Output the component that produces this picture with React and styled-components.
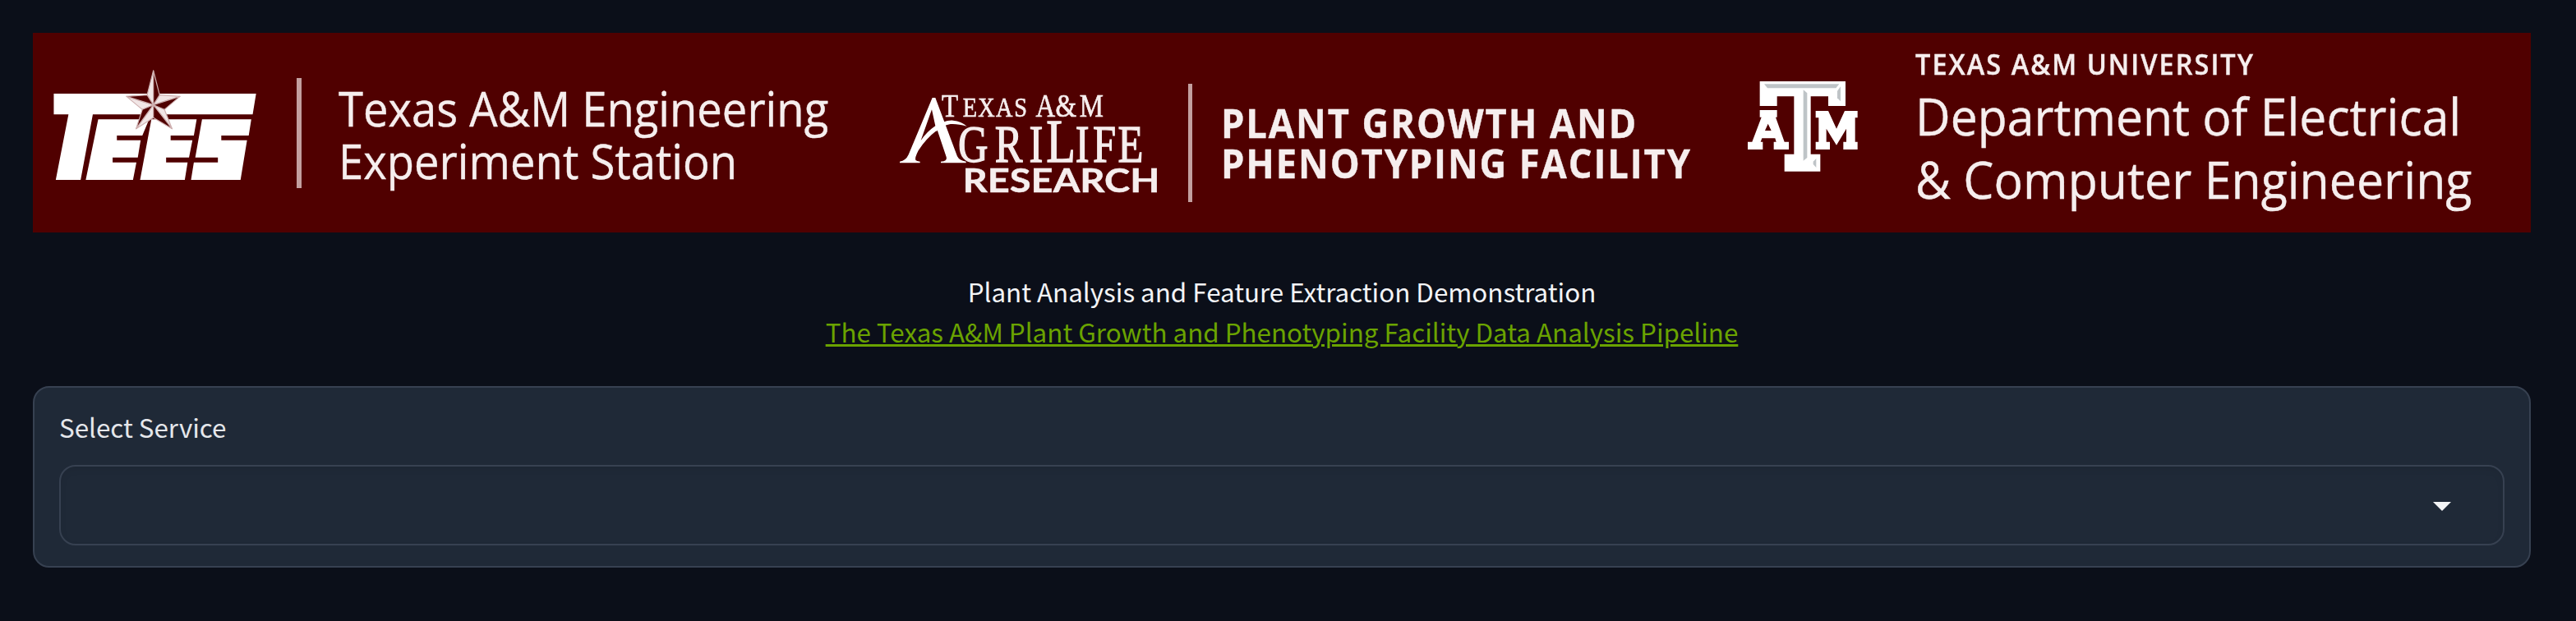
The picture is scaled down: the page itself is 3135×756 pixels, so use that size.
import React from 'react';
import styled, { createGlobalStyle } from 'styled-components';

const GlobalStyle = createGlobalStyle`
  * { box-sizing: border-box; }
  body {
    margin: 0;
    min-height: 100vh;
    background: #0b0f19;
    color: #f3f4f6;
    font-family: 'Noto Sans CJK SC', 'Noto Sans', sans-serif;
    font-size: 31.35px;
  }
`;

const Page = styled.main`
  display: flex;
  flex-direction: column;
  padding: 40px 55px 0 40px;
`;

const Banner = styled.header`
  height: 243px;
  background: #500000;
`;

const BannerContent = styled.div`
  display: flex;
  align-items: flex-start;
  padding-left: 20px;
  filter: blur(0.7px);
`;

const Logo = styled.svg`
  flex: none;
  display: block;
  width: ${(p) => p.$w}px;
  height: ${(p) => p.$h}px;
  margin: ${(p) => p.$top}px 0 0 ${(p) => p.$left || 0}px;
`;

const Divider = styled.div`
  flex: none;
  width: ${(p) => p.$w}px;
  height: ${(p) => p.$h}px;
  margin: ${(p) => p.$top}px 0 0 ${(p) => p.$left}px;
  background: ${(p) => p.$color};
`;

const Wordmark = styled.div`
  flex: none;
  width: ${(p) => p.$w}px;
  margin: ${(p) => p.$top}px 0 0 ${(p) => p.$left}px;
  color: #f6eeee;
  font-family: 'Open Sans', sans-serif;
  -webkit-text-stroke: 0.4px #f6eeee;
  white-space: nowrap;
`;

const WordLine = styled.div`
  width: max-content;
  font-size: ${(p) => p.$size}px;
  line-height: ${(p) => p.$line}px;
  font-weight: ${(p) => p.$weight || 400};
  letter-spacing: ${(p) => p.$track || 0}px;
  margin-bottom: ${(p) => p.$gap || 0}px;
  transform: scaleX(${(p) => p.$stretch});
  transform-origin: left center;
`;

const Intro = styled.section`
  margin-top: 47px;
  text-align: center;
  line-height: 49px;
`;

const PipelineLink = styled.a`
  color: #6aa300;
  text-decoration: underline;
  text-decoration-thickness: 3px;
  text-underline-offset: 2px;
`;

const Panel = styled.section`
  height: 221px;
  margin-top: 42px;
  padding: 25px 30px 0;
  border: 2px solid #374151;
  border-radius: 20px;
  background: #1f2937;
`;

const Label = styled.label`
  display: block;
  line-height: 45px;
  color: #e5e7eb;
`;

const Select = styled.div`
  display: flex;
  align-items: center;
  justify-content: flex-end;
  height: 98px;
  margin-top: 24px;
  padding-right: 63px;
  border: 2px solid #374151;
  border-radius: 20px;
  box-shadow: inset 0 4px 8px rgba(0, 0, 0, 0.06);
`;

const Caret = styled.svg`
  width: 22px;
  height: 11px;
  margin-top: 3px;
  fill: #f3f4f6;
`;

const starLight = [
  '542,323 520,287 542,198',
  '542,323 564,287 636,292',
  '542,323 581,340 608,410',
  '542,323 542,370 481,410',
  '542,323 503,340 447,292',
];
const starDark = [
  '542,323 564,287 542,198',
  '542,323 581,340 636,292',
  '542,323 542,370 608,410',
  '542,323 503,340 481,410',
  '542,323 520,287 447,292',
];

function TeesLogo() {
  return (
    <Logo $w={260} $h={145} $top={40} viewBox="174.2 180 755 435" preserveAspectRatio="none">
      <g fill="#fff">
        <path d="M190 282H905L893 358H328L285 597H197L242 358H190Z" />
        <path d="M347 376H527L503 435H413V452H497L487 515H398V533H482L470 597H303Z" />
        <path d="M535 376H695L685 435H603V452H680L668 515H587V533H663L653 597H495Z" />
        <path d="M714 376H888L879 435H782V452H873L850 597H675L685 533H770V515H690Z" />
      </g>
      <g stroke="#cfb0b0" strokeWidth="3.5" strokeLinejoin="round">
        {starLight.map((p) => <polygon key={p} points={p} fill="#f1e6e6" />)}
        {starDark.map((p) => <polygon key={p} points={p} fill="#500000" />)}
      </g>
    </Logo>
  );
}

function AgriLifeLogo() {
  return (
    <Logo $w={340} $h={176} $top={40} $left={68.5} viewBox="0 0 340 176">
      <g transform="translate(5 25) scale(.3333)" fill="#fff">
        <path
          fillRule="evenodd"
          d="M149 42H160L240 256Q248 272 272 275V280H180V275Q206 274 200 258L167 160Q125 192 98 235Q84 262 88 270Q92 274 104 275V280H30V275Q52 272 62 250ZM147 85L107 198Q130 165 160 145Z"
        />
        <path d="M155 152Q190 123 225 125Q255 128 275 146Q240 136 215 138Q185 143 163 165Z" />
      </g>
      <g fill="#f6eeee" stroke="#f6eeee" fontFamily="'Liberation Serif', serif">
        <text y="62" fontSize="40" strokeWidth=".7" transform="scale(.82 1)">
          <tspan x="80.5">T</tspan>
          <tspan x="112 134.5 161 188" fontSize="34.5">EXAS</tspan>
          <tspan x="220 249.5 285">A&amp;M</tspan>
        </text>
        <text y="117" fontSize="64" strokeWidth="1.3" transform="scale(.79 1)">
          <tspan x="109 165.5 218.5">GRI</tspan>
          <tspan x="244.5" fontSize="74">L</tspan>
          <tspan x="289.5 316.5 355">IFE</tspan>
        </text>
      </g>
      <text
        x="91.5"
        y="154.3"
        fill="#f6eeee"
        stroke="#f6eeee"
        strokeWidth=".5"
        fontFamily="Lato, sans-serif"
        fontWeight="700"
        fontSize="40"
        textLength="240"
        lengthAdjust="spacingAndGlyphs"
      >
        RESEARCH
      </text>
    </Logo>
  );
}

function AtmLogo() {
  return (
    <Logo $w={180} $h={160} $top={20} $left={25} viewBox="0 0 540 480">
      <g fill="#fff">
        <path d="M122 117H435V207H372V172H308V383H343V446H212V383H247V172H185V207H122Z" />
        <path
          fillRule="evenodd"
          d="M122 222H185V248H180L212 338H228V366H173V338H182L178 325H130L125 338H133V366H78V338H94L128 248H122ZM152 272L141 297H164Z"
        />
        <path d="M326 225H372L402 290L432 225H479V250H470V338H479V366H427V338H438V290L402 350L365 290V338H378V366H326V338H337V250H326Z" />
      </g>
      <g fill="#bfc4c7">
        <path d="M138 127H412L400 142H150Z" />
        <path d="M281 148L295 160V396L281 407Z" />
        <path d="M417 136V190L405 178V152Z" />
        <path d="M328 399V432L317 420V410Z" />
      </g>
    </Logo>
  );
}

export default function App() {
  return (
    <>
      <GlobalStyle />
      <Page>
        <Banner>
          <BannerContent>
            <TeesLogo />
            <Divider $w={6} $h={134} $top={55} $left={41} $color="#c3a0a0" />
            <Wordmark $w={600} $top={59.7} $left={44.5}>
              <WordLine $size={57.6} $line={64} $stretch={0.944}>Texas A&amp;M Engineering</WordLine>
              <WordLine $size={57.6} $line={64} $stretch={0.945}>Experiment Station</WordLine>
            </Wordmark>
            <AgriLifeLogo />
            <Divider $w={4.5} $h={144} $top={62} $left={26} $color="#c3a0a0" />
            <Wordmark $w={590} $top={85.3} $left={35}>
              <WordLine $size={47.6} $line={49} $weight={700} $track={2.05} $stretch={0.95}>PLANT GROWTH AND</WordLine>
              <WordLine $size={47.6} $line={49} $weight={700} $track={2} $stretch={0.95}>PHENOTYPING FACILITY</WordLine>
            </Wordmark>
            <AtmLogo />
            <Wordmark $w={700} $top={17.9} $left={50.5}>
              <WordLine $size={34.5} $line={40} $weight={600} $track={2.2} $gap={4} $stretch={0.94}>TEXAS A&amp;M UNIVERSITY</WordLine>
              <WordLine $size={63} $line={77.5} $stretch={0.934}>Department of Electrical</WordLine>
              <WordLine $size={63} $line={77.5} $stretch={0.937}>&amp; Computer Engineering</WordLine>
            </Wordmark>
          </BannerContent>
        </Banner>
        <Intro>
          <div>Plant Analysis and Feature Extraction Demonstration</div>
          <PipelineLink href="#">
            The Texas A&amp;M Plant Growth and Phenotyping Facility Data Analysis Pipeline
          </PipelineLink>
        </Intro>
        <Panel>
          <Label>Select Service</Label>
          <Select role="combobox" aria-label="Select Service">
            <Caret viewBox="0 0 22 11"><path d="M0 0H22L11 11Z" /></Caret>
          </Select>
        </Panel>
      </Page>
    </>
  );
}
